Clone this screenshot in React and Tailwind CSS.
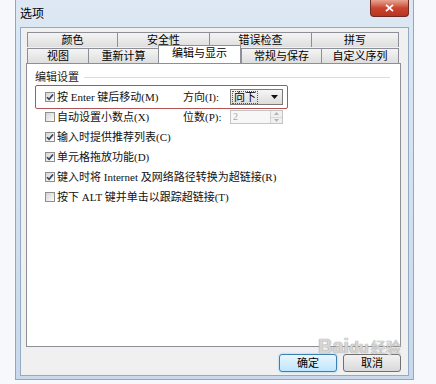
const FONT = { fontFamily: '"Liberation Serif", "Noto Sans CJK SC", serif' };

const Tab = ({ label, w, active }) => (
    <div
        className={`flex items-center justify-center border-t border-l border-[#8c8f96] text-[11px] leading-none text-black ${
            active
                ? "relative z-10 -mt-[2px] h-[18px] border-r bg-white pb-[3px]"
                : "h-[15px] bg-gradient-to-b from-[#f4f4f4] to-[#dedede]"
        }`}
        style={{ width: w }}
    >
        {label}
    </div>
);

const Checkbox = ({ checked }) => (
    <div className="flex h-[10px] w-[10px] shrink-0 items-center justify-center border border-[#8e8f8f] bg-gradient-to-br from-[#d6d6d6] to-[#fbfbfb]">
        {checked && (
            <svg width="8" height="8" viewBox="0 0 8 8">
                <path d="M1 4.2 L3.1 6.3 L7 1.6" fill="none" stroke="#2f3f55" strokeWidth="1.6" />
            </svg>
        )}
    </div>
);

const CheckRow = ({ checked, children }) => (
    <div className="flex h-[20px] items-center gap-[2px] text-[11px] text-[#111]">
        <Checkbox checked={checked} />
        <span className="whitespace-nowrap">{children}</span>
    </div>
);

const rows1 = [
    { label: "颜色", w: 90 },
    { label: "安全性", w: 92 },
    { label: "错误检查", w: 102 },
    { label: "拼写", w: 87 },
];

const rows2 = [
    { label: "视图", w: 61 },
    { label: "重新计算", w: 70 },
    { label: "编辑与显示", w: 83, active: true },
    { label: "常规与保存", w: 80 },
    { label: "自定义序列", w: 77 },
];

export default function App() {
    return (
        <div className="relative h-[384px] w-[436px] overflow-hidden bg-[#f6f8fb] pl-[15px]" style={FONT}>
            <div className="flex h-[380px] w-[399px] flex-col border-x border-b border-[#8fa8c4] bg-gradient-to-b from-[#dde8f4] to-[#c9d9eb]">
                {/* title bar */}
                <div className="flex h-[27px] shrink-0 items-start justify-between pl-[4px] pr-[4px]">
                    <span className="mt-[4px] text-[12px] text-black" style={{ fontFamily: '"Noto Sans CJK SC", sans-serif' }}>
                        选项
                    </span>
                    <div className="flex h-[17px] w-[39px] items-center justify-center rounded-b-[4px] border border-t-0 border-[#6e2a24] bg-gradient-to-b from-[#e8a492] via-[#c9452f] to-[#b93520]">
                        <svg width="9" height="8" viewBox="0 0 9 8">
                            <path d="M1 0.8 L8 7.2 M8 0.8 L1 7.2" stroke="#fff" strokeWidth="1.8" />
                        </svg>
                    </div>
                </div>

                {/* client area */}
                <div className="mx-[4px] mb-[3px] flex flex-1 flex-col border border-[#93aac4] bg-[#f0f0f0] pl-[5px] pt-[4px]">
                    <div className="ml-[1px] flex">
                        {rows1.map((t, i) => (
                            <div key={t.label} className={i === rows1.length - 1 ? "border-r border-[#8c8f96]" : ""}>
                                <Tab {...t} />
                            </div>
                        ))}
                    </div>
                    <div className="ml-[1px] flex items-end">
                        {rows2.map((t, i) => (
                            <div key={t.label} className={i === rows2.length - 1 ? "border-r border-[#8c8f96]" : ""}>
                                <Tab {...t} />
                            </div>
                        ))}
                    </div>

                    {/* panel */}
                    <div className="relative flex h-[284px] w-[375px] flex-col border border-[#8c8f96] bg-white pl-[8px] pr-[10px] pt-[6px]">
                        <div className="flex items-center gap-[5px] text-[11px] text-[#222]">
                            <span className="whitespace-nowrap leading-[14px]">编辑设置</span>
                            <div className="h-px flex-1 bg-[#d5dfe5]" />
                        </div>

                        <div className="mt-[3px] flex flex-col pl-[10px]">
                            <div className="flex items-center">
                                <div className="w-[138px]">
                                    <CheckRow checked>按 Enter 键后移动(M)</CheckRow>
                                </div>
                                <span className="w-[47px] whitespace-nowrap text-[11px] text-[#111]">方向(I):</span>
                                <div className="flex h-[16px] w-[53px] items-center justify-between border border-[#7b7b7b] bg-gradient-to-b from-[#f6f6f6] to-[#dcdcdc] pl-[1px] pr-[4px]">
                                    <span className="border border-dotted border-[#555] px-[1px] text-[11px] leading-[11px] text-black">向下</span>
                                    <svg width="7" height="4" viewBox="0 0 7 4">
                                        <path d="M0 0 H7 L3.5 4 Z" fill="#111" />
                                    </svg>
                                </div>
                            </div>
                            <div className="flex items-center">
                                <div className="w-[138px]">
                                    <CheckRow>自动设置小数点(X)</CheckRow>
                                </div>
                                <span className="w-[47px] whitespace-nowrap text-[11px] text-[#111]">位数(P):</span>
                                <div className="flex h-[14px] w-[53px] items-stretch border border-[#c5c5c5] bg-[#f7f7f7]">
                                    <span className="flex-1 pl-[2px] text-[10px] leading-[12px] text-[#a8a8a8]">2</span>
                                    <div className="flex w-[12px] flex-col border-l border-[#d2d2d2]">
                                        <div className="flex flex-1 items-center justify-center border-b border-[#d8d8d8] bg-[#f0f0f0]">
                                            <svg width="5" height="3" viewBox="0 0 5 3"><path d="M0 3 H5 L2.5 0 Z" fill="#b5b5b5" /></svg>
                                        </div>
                                        <div className="flex flex-1 items-center justify-center bg-[#f0f0f0]">
                                            <svg width="5" height="3" viewBox="0 0 5 3"><path d="M0 0 H5 L2.5 3 Z" fill="#b5b5b5" /></svg>
                                        </div>
                                    </div>
                                </div>
                            </div>
                            <CheckRow checked>输入时提供推荐列表(C)</CheckRow>
                            <CheckRow checked>单元格拖放功能(D)</CheckRow>
                            <CheckRow checked>键入时将 Internet 及网络路径转换为超链接(R)</CheckRow>
                            <CheckRow>按下 ALT 键并单击以跟踪超链接(T)</CheckRow>
                        </div>

                        {/* annotation box */}
                        <div className="absolute left-[8px] top-[21px] h-[24px] w-[253px] rounded-[2px] border-[1.5px] border-[#b35454]" />
                    </div>

                    {/* buttons */}
                    <div className="mt-[7px] flex w-[375px] justify-end gap-[6px]">
                        <div className="flex h-[18px] w-[58px] items-center justify-center rounded-[3px] border border-[#3c7fb1] bg-gradient-to-b from-[#eaf6fd] to-[#bee6fd] text-[11px] text-black shadow-[0_0_2px_#6fc3f0]">
                            确定
                        </div>
                        <div className="flex h-[18px] w-[58px] items-center justify-center rounded-[3px] border border-[#707070] bg-gradient-to-b from-[#f2f2f2] to-[#d9d9d9] text-[11px] text-black">
                            取消
                        </div>
                    </div>
                </div>
            </div>

            {/* watermark */}
            <div
                className="pointer-events-none absolute left-[318px] top-[336px] text-[20px] font-bold leading-none text-white/60"
                style={{ fontFamily: '"Liberation Sans", "Noto Sans CJK SC", sans-serif', textShadow: "0 0 1px #9a9a9a, 0 0 1px #9a9a9a" }}
            >
                Bai<span className="text-[16px]">du</span>
                <span className="ml-[2px] text-[15px] font-normal">经验</span>
            </div>
        </div>
    );
}
